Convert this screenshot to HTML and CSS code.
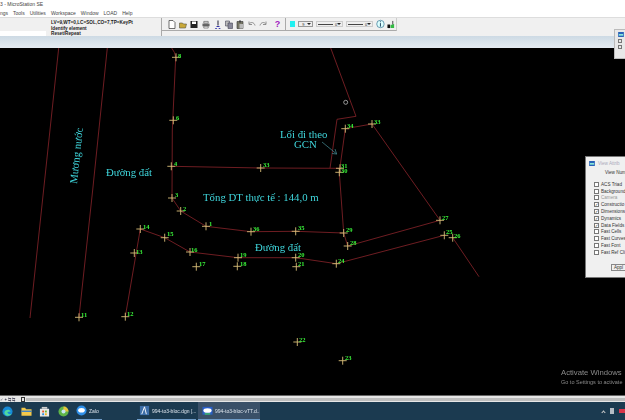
FILE: index.html
```html
<!DOCTYPE html>
<html lang="en">
  <head>
    <meta charset="UTF-8" />
    <meta name="viewport" content="width=device-width, initial-scale=1.0" />
    <title>MicroStation SE</title>
    <link rel="stylesheet" href="styles.css">
  </head>
  <body>
    <div class="title-bar">3 - MicroStation SE</div>
    <div class="menu-bar">
      <span>ngs</span>
      <span>Tools</span>
      <span>Utilities</span>
      <span>Workspace</span>
      <span>Window</span>
      <span>LOAD</span>
      <span>Help</span>
    </div>

    <div class="tool-row">
      <div class="command-area">
        <div class="key-in"></div>
        <div class="prompt">
          <div>LV=9,WT=0,LC=SOL,CO=7,TP=KeyPt</div>
          <div>Identify element</div>
          <div>Reset/Repeat</div>
        </div>
      </div>
      <div class="toolbar">
        <svg class="tool" viewBox="0 0 8 9"><path d="M1 .5h4l2 2v6H1z" fill="#fff" stroke="#333" stroke-width=".7"/></svg>
        <svg class="tool" viewBox="0 0 8 9"><path d="M.5 3h3l1 1h3L6.500 8H.5z" fill="#c9a93a" stroke="#554" stroke-width=".6"/></svg>
        <svg class="tool" viewBox="0 0 8 9"><path d="M.5 1h7v7h-7z" fill="#222"/><path d="M2 1.500h4v2.500H2z" fill="#fff"/></svg>
        <svg class="tool tool-gap" viewBox="0 0 9 9"><path d="M2 1h5v2H2z" fill="#ddd" stroke="#444" stroke-width=".6"/><path d="M.5 3.500h8v3h-8z" fill="#666"/><path d="M2 6.500h5v2H2z" fill="#eee" stroke="#444" stroke-width=".6"/></svg>
        <svg class="tool tool-gap" viewBox="0 0 8 9"><path d="M4 .5v5" stroke="#445" stroke-width="1.200"/><path d="M2 8a1.200 1.200 0 1 0 .1 0zM5.500 8a1.200 1.200 0 1 0 .1 0z" fill="#33a"/><path d="M2.500 6h3v1h-3z" fill="#33a"/></svg>
        <svg class="tool" viewBox="0 0 8 9"><path d="M.5 1h4v5h-4z" fill="#bbb" stroke="#445" stroke-width=".6"/><path d="M3 3h4.500v5.500H3z" fill="#889" stroke="#445" stroke-width=".6"/></svg>
        <svg class="tool" viewBox="0 0 8 9"><path d="M1 1.500h6v7H1z" fill="#776" stroke="#333" stroke-width=".6"/><path d="M3 .5h2v2H3z" fill="#444"/><path d="M3.500 4h3.500v4.500H3.500z" fill="#bbb"/></svg>
        <svg class="tool tool-gap" viewBox="0 0 8 9"><path d="M1.500 3.500C3 2 6 2 7 5.500M1 1.500v3h3" fill="none" stroke="#777" stroke-width=".8"/></svg>
        <svg class="tool" viewBox="0 0 8 9"><path d="M6.500 3.500C5 2 2 2 1 5.500M7 1.500v3H4" fill="none" stroke="#777" stroke-width=".8"/></svg>
        <span class="help-mark">?</span>
        <span class="toolbar-sep"></span>
        <span class="color-swatch"></span>
        <span class="combo combo-color">9<i></i></span>
        <span class="combo combo-line"><b></b>0<i></i></span>
        <span class="combo combo-line"><b></b>0<i></i></span>
        <svg class="tool-info" viewBox="0 0 10 10"><circle cx="5" cy="5" r="4.200" fill="#dff" stroke="#268" stroke-width=".7"/><path d="M5 2v1M5 4v4" stroke="#135" stroke-width="1"/></svg>
        <svg class="tool" viewBox="0 0 9 9"><path d="M.5 4.500h3v4h-3z" fill="#111"/><path d="M4 8.500V5l4-1v4.500z" fill="#3b4"/><path d="M6.500 .5v4" stroke="#333" stroke-width="1"/></svg>
      </div>
    </div>

    <div class="band"></div>

    <div class="canvas">
      <svg class="drawing" viewBox="0 48 625 348">
        <g class="lines">
          <path d="M58.700 48 30 318"/>
          <path d="M107.300 48 92.700 190 79 317"/>
          <path d="M171.700 48Q175 52 175.700 57.300L172.300 130 172 198 180.700 211 206 226.300 251 231.700 295.700 231.300 343.700 233 347.700 246 440 220.300"/>
          <path d="M171.300 166.300 260.700 168 340 168.300"/>
          <path d="M330.700 48 356 116.300 337 119.300 330 168.300"/>
          <path d="M372 124 345.300 128.700 339.300 172.300 343.700 233"/>
          <path d="M372 124 440 220.300"/>
          <path d="M140.300 229 164.700 237.700 190 252 238 257.700 295.700 257.700 336.300 263.700 444.300 235.300"/>
          <path d="M140.300 229 125.300 316.700"/>
          <path d="M452.700 237.700 479 276.700"/>
        </g>
        <path class="arrow" d="M322 142 336.700 154M332 153.500 336.700 154 335 149"/>
        <circle class="cursor" cx="345.700" cy="102.300" r="2"/>
        <path class="crosses" d="M172 57.300h8M176 53.300v8M169.300 120.300h8M173.300 116.300v8M167.300 166.300h8M171.300 162.300v8M168 198h8M172 194v8M176.700 211h8M180.700 207v8M202 226.300h8M206 222.300v8M247 231.700h8M251 227.700v8M291.700 231.300h8M295.700 227.300v8M339.700 233h8M343.700 229v8M343.700 246h8M347.700 242v8M332.300 263.700h8M336.300 259.700v8M291.700 257.700h8M295.700 253.700v8M234 257.700h8M238 253.700v8M186 252h8M190 248v8M160.700 237.700h8M164.700 233.700v8M136.300 229h8M140.300 225v8M130.300 253h8M134.300 249v8M121.300 316.700h8M125.300 312.700v8M75 317.300h8M79 313.300v8M192.300 266.700h8M196.300 262.700v8M233.300 266.300h8M237.300 262.300v8M292.300 266.700h8M296.300 262.700v8M293.300 342h8M297.300 338v8M338.700 360.700h8M342.700 356.700v8M256.700 168h8M260.700 164v8M336 168.300h8M340 164.300v8M335.300 172.300h8M339.300 168.300v8M341.300 128.700h8M345.300 124.700v8M368 124h8M372 120v8M436 220.300h8M440 216.300v8M440.300 235.300h8M444.300 231.300v8M448.700 237.700h8M452.700 233.700v8"/>
        <g class="point-labels">
          <text x="178" y="58">8</text>
          <text x="176" y="120">6</text>
          <text x="174" y="165.500">4</text>
          <text x="175" y="197">3</text>
          <text x="183" y="211">2</text>
          <text x="209" y="226">1</text>
          <text x="253" y="231">36</text>
          <text x="298" y="230">35</text>
          <text x="346" y="232">29</text>
          <text x="350" y="245">28</text>
          <text x="338" y="263">24</text>
          <text x="298" y="257">20</text>
          <text x="240" y="257">19</text>
          <text x="191" y="252">16</text>
          <text x="167" y="236">15</text>
          <text x="143" y="229">14</text>
          <text x="136" y="254">13</text>
          <text x="127" y="316">12</text>
          <text x="81" y="317">11</text>
          <text x="199" y="266">17</text>
          <text x="240" y="266">18</text>
          <text x="298" y="266">21</text>
          <text x="299" y="342">22</text>
          <text x="345" y="360">23</text>
          <text x="263" y="167">33</text>
          <text x="341" y="168">31</text>
          <text x="341" y="172.500">30</text>
          <text x="347" y="128">34</text>
          <text x="374" y="124">33</text>
          <text x="442" y="220">27</text>
          <text x="446" y="234">25</text>
          <text x="454" y="238">26</text>
        </g>
        <g class="notes">
          <text class="note-sm" transform="translate(77 184) rotate(-84)">Mương nước</text>
          <text class="note-sm" x="106" y="176">Đường đất</text>
          <text class="note-sm" x="280" y="138">Lối đi theo</text>
          <text class="note-sm" x="294" y="147.500">GCN</text>
          <text class="note-lg" x="203" y="201">Tổng DT thực tế : 144,0 m</text>
          <text class="note-sm" x="255" y="251">Đường đất</text>
        </g>
      </svg>

      <div class="activate">
        <div class="activate-head">Activate Windows</div>
        <div class="activate-sub">Go to Settings to activate</div>
      </div>
    </div>

    <div class="status-bar">
      <span class="status-icons">✓ ✦ ⇆ ⇆</span>
      <span class="status-box"></span>
      <span class="status-fill"></span>
    </div>

    <div class="taskbar">
      <svg class="task-icon edge" viewBox="0 0 12 12"><circle cx="6" cy="6" r="5.500" fill="#1689d6"/><path d="M2.500 7.500C3 4 8 3 9.500 6L6 6.500C6 8.500 8 9.500 10.500 8.500 9 11.500 3.500 11.500 2.500 7.500z" fill="#4fd9a0"/></svg>
      <svg class="task-icon folder" viewBox="0 0 12 12"><path d="M.5 2h4l1 1.500h6V10.500H.5z" fill="#f2c84b"/><path d="M.5 5h11v1.500H.5z" fill="#3a80c8"/></svg>
      <svg class="task-icon store" viewBox="0 0 12 12"><path d="M1 3h10v8.500H1z" fill="#e8e8e8"/><path d="M3 1h6v2H3z" fill="#cfcfcf"/><path d="M3.500 5h2v2h-2z" fill="#e8562a"/><path d="M6.500 5h2v2h-2z" fill="#6fb52c"/><path d="M3.500 8h2v2h-2z" fill="#2b8fdc"/><path d="M6.500 8h2v2h-2z" fill="#f6b81c"/></svg>
      <svg class="task-icon chrome" viewBox="0 0 12 12"><circle cx="6" cy="6" r="5.500" fill="#5fb548"/><path d="M6 .5A5.500 5.500 0 0 1 11.500 6H6z" fill="#e6c53c"/><circle cx="6" cy="6" r="2.200" fill="#c9e6f0"/></svg>
      <div class="task-item task-zalo">
        <svg class="task-icon" viewBox="0 0 12 12"><circle cx="6" cy="6" r="5.500" fill="#2f8fe8"/><ellipse cx="6" cy="5.700" rx="3.600" ry="2.500" fill="#fff"/></svg>
        <span>Zalo</span>
      </div>
      <div class="task-item task-dgn">
        <svg class="task-icon" viewBox="0 0 12 12"><path d="M1 1h10v10H1z" fill="#3d6ea8"/><path d="M3 10 6 2l2 8" fill="none" stroke="#fff" stroke-width="1"/></svg>
        <span>994-to3-bloc.dgn [...</span>
      </div>
      <div class="task-item task-active">
        <svg class="task-icon" viewBox="0 0 12 12"><path d="M.5 2h11v8.500H.5z" fill="#2a5fc8"/><ellipse cx="6" cy="6" rx="4.500" ry="2.500" fill="#fff"/><path d="M3 9h6v1.500H3z" fill="#3fbf5f"/></svg>
        <span>994-to3-bloc-vTT.d...</span>
      </div>
      <div class="tray">
        <span class="tray-up"></span>
        <span class="tray-file"></span>
        <span class="tray-red"></span>
      </div>
    </div>

    <div class="float-tools">
      <svg class="float-logo" viewBox="0 0 8 7"><path d="M0 0h8v7H0z" fill="#2a62b8"/><path d="M1 3h6v2H1z" fill="#9fd"/></svg>
      <span class="float-check"></span>
      <span class="float-check"></span>
    </div>

    <div class="view-dialog">
      <div class="dialog-title">
        <svg class="float-logo" viewBox="0 0 8 7"><path d="M0 0h8v7H0z" fill="#2a62b8"/><path d="M1 3h6v2H1z" fill="#9fd"/></svg>
        <span>View Attrib</span>
      </div>
      <div class="dialog-view">View Num</div>
      <label class="attr"><i></i>ACS Triad</label>
      <label class="attr"><i></i>Background</label>
      <label class="attr attr-off"><i></i>Camera</label>
      <label class="attr"><i class="on"></i>Constructio</label>
      <label class="attr"><i class="on"></i>Dimensions</label>
      <label class="attr"><i class="on"></i>Dynamics</label>
      <label class="attr"><i class="on"></i>Data Fields</label>
      <label class="attr"><i></i>Fast Cells</label>
      <label class="attr"><i></i>Fast Curves</label>
      <label class="attr"><i></i>Fast Font</label>
      <label class="attr"><i></i>Fast Ref Cli</label>
      <span class="apply-btn">Appl</span>
    </div>
  </body>
</html>
```

FILE: styles.css
```css
* {
  margin: 0;
  padding: 0;
  box-sizing: border-box;
}

body {
  width: 625px;
  height: 420px;
  overflow: hidden;
  display: flex;
  flex-direction: column;
  position: relative;
  font-family: "Liberation Sans", Arial, sans-serif;
  background-color: #f0f0f0;
  color: #222;
  filter: blur(0.35px);
}

.title-bar {
  height: 9px;
  background-color: #fff;
  font-size: 5px;
  line-height: 8px;
  color: #444;
}

.menu-bar {
  height: 8px;
  display: flex;
  gap: 5px;
  background-color: #fff;
  font-size: 5px;
  line-height: 8px;
  color: #444;
}

.tool-row {
  height: 19px;
  display: flex;
  background-color: #f0f0f0;
  border-top: 1px solid #ddd;
}

.command-area {
  width: 162px;
  display: flex;
  position: relative;
  border-right: 1px solid #aaa;
}

.key-in {
  width: 46px;
  height: 5px;
  margin-top: 13px;
  background-color: #fff;
}

.prompt {
  margin-left: 5px;
  padding-top: 2px;
  font-size: 4.700px;
  line-height: 5.500px;
  font-weight: bold;
  color: #222;
}

.toolbar {
  width: 235px;
  height: 13px;
  display: flex;
  align-items: center;
  gap: 2px;
  padding-left: 6px;
  border-bottom: 1px solid #aaa;
  border-right: 1px solid #ccc;
}

.tool {
  width: 8px;
  height: 9px;
  margin-right: 1px;
  flex-shrink: 0;
}

.tool-gap {
  margin-left: 1px;
}

.help-mark {
  width: 8px;
  margin-left: 4px;
  font-size: 9px;
  font-weight: bold;
  color: #a020c0;
  text-align: center;
}

.toolbar-sep {
  width: 1px;
  height: 12px;
  margin-left: 2px;
  background-color: #aaa;
}

.color-swatch {
  width: 6px;
  height: 6px;
  margin-left: 2px;
  background-color: #22f0f0;
}

.combo {
  height: 6px;
  display: flex;
  align-items: center;
  font-size: 4px;
  background-color: #eee;
  border: 1px solid #999;
}

.combo i {
  width: 0;
  height: 0;
  margin-left: auto;
  margin-right: 1px;
  border-left: 2px solid transparent;
  border-right: 2px solid transparent;
  border-top: 2px solid #222;
}

.combo-color {
  width: 16px;
  padding-left: 3px;
  margin-left: 1px;
}

.combo-line {
  width: 27px;
  margin-left: 1px;
  padding-left: 1px;
  border-color: #ccc;
}

.combo-line b {
  width: 15px;
  height: 1px;
  margin-right: 2px;
  background-color: #444;
}

.tool-info {
  width: 10px;
  height: 10px;
  margin-left: 1px;
}

.band {
  height: 12px;
  background: linear-gradient(#cddae4, #e4ebf1);
}

.canvas {
  flex: 1;
  position: relative;
  overflow: hidden;
  background-color: #000;
}

.drawing {
  display: block;
  width: 625px;
  height: 348px;
}

.lines path {
  fill: none;
  stroke: #7a2026;
  stroke-width: 0.9;
}

.arrow {
  fill: none;
  stroke: #3f7f88;
  stroke-width: 0.8;
}

.cursor {
  fill: none;
  stroke: #bbb;
  stroke-width: 0.8;
}

.crosses {
  fill: none;
  stroke: #d8bd78;
  stroke-width: 0.9;
}

.point-labels text {
  font-family: "Liberation Serif", serif;
  font-size: 6.500px;
  font-weight: bold;
  fill: #39f039;
}

.notes text {
  font-family: "Liberation Serif", serif;
  fill: #3fd6dc;
}

.note-sm {
  font-size: 10.800px;
}

.note-lg {
  font-size: 10.800px;
}

.activate {
  position: absolute;
  left: 561px;
  top: 320px;
  width: 64px;
  overflow: hidden;
  white-space: nowrap;
  color: #8a8a8a;
}

.activate-head {
  font-size: 7.700px;
  line-height: 10px;
}

.activate-sub {
  font-size: 5.500px;
  line-height: 8px;
}

.status-bar {
  height: 7px;
  display: flex;
  align-items: center;
  background-color: #e6e6e6;
  border-top: 1px solid #666;
}

.status-icons {
  width: 21px;
  font-size: 4px;
  color: #556;
  white-space: nowrap;
  overflow: hidden;
}

.status-box {
  width: 4px;
  height: 5px;
  border: 1px solid #333;
}

.status-fill {
  flex: 1;
  height: 3px;
  margin-left: 1px;
  background-color: #bdbdbd;
}

.taskbar {
  height: 18px;
  display: flex;
  align-items: center;
  position: relative;
  background-color: #1b3a50;
  font-size: 5px;
  color: #dfe6ee;
  white-space: nowrap;
}

.task-icon {
  width: 11px;
  height: 11px;
  flex-shrink: 0;
}

.edge {
  margin-left: 2px;
}

.folder {
  margin-left: 8px;
}

.store {
  margin-left: 7px;
}

.chrome {
  margin-left: 8px;
}

.task-item {
  height: 18px;
  display: flex;
  align-items: center;
  gap: 2px;
  overflow: hidden;
  border-bottom: 1px solid #6f9cc8;
}

.task-zalo {
  width: 26px;
  margin-left: 7px;
}

.task-dgn {
  width: 59px;
  margin-left: 35px;
  padding-left: 2px;
}

.task-active {
  width: 62px;
  margin-left: 2px;
  padding-left: 4px;
  background-color: #3a5068;
}

.tray {
  margin-left: auto;
  display: flex;
  align-items: center;
  gap: 5px;
}

.tray-up {
  width: 3px;
  height: 3px;
  margin-top: 2px;
  border-left: 1px solid #ccc;
  border-top: 1px solid #ccc;
  transform: rotate(45deg);
}

.tray-file {
  width: 4px;
  height: 6px;
  background-color: #b5bcc4;
}

.tray-red {
  width: 6px;
  height: 4px;
  background-color: #d8344a;
}

.float-tools {
  position: absolute;
  left: 614px;
  top: 29px;
  width: 12px;
  height: 30px;
  padding: 2px 0 0 3px;
  display: flex;
  flex-direction: column;
  gap: 2px;
  background-color: #e8e8e8;
  border: 1px solid #bbb;
}

.float-logo {
  width: 6px;
  height: 5px;
  flex-shrink: 0;
}

.float-check {
  width: 4px;
  height: 4px;
  border: 1px solid #777;
}

/* the window runs off the right side of the screen */
.view-dialog {
  position: absolute;
  left: 585px;
  top: 156px;
  width: 40px;
  height: 122px;
  padding: 2px 0 0 3px;
  background-color: #f0f0f0;
  border: 1px solid #777;
  border-right: none;
  font-size: 4.600px;
  color: #333;
  white-space: nowrap;
}

.dialog-title {
  height: 8px;
  display: flex;
  align-items: center;
  gap: 3px;
  color: #aab;
}

.dialog-view {
  margin: 2px 0 5px 16px;
  line-height: 7px;
}

.attr {
  height: 6.800px;
  display: flex;
  align-items: center;
  gap: 2px;
  margin-left: 5px;
}

.attr i {
  width: 5px;
  height: 5px;
  flex-shrink: 0;
  display: flex;
  align-items: center;
  justify-content: center;
  background-color: #fff;
  border: 1px solid #777;
  font-style: normal;
  font-size: 4px;
  line-height: 3px;
  overflow: hidden;
}

.attr i.on::after {
  content: "✓";
  color: #222;
}

.attr-off {
  color: #999;
}

.apply-btn {
  display: block;
  width: 14px;
  height: 7px;
  margin: 8px 0 0 22px;
  line-height: 6px;
  text-align: center;
  border: 1px solid #888;
  border-right: none;
}
```
